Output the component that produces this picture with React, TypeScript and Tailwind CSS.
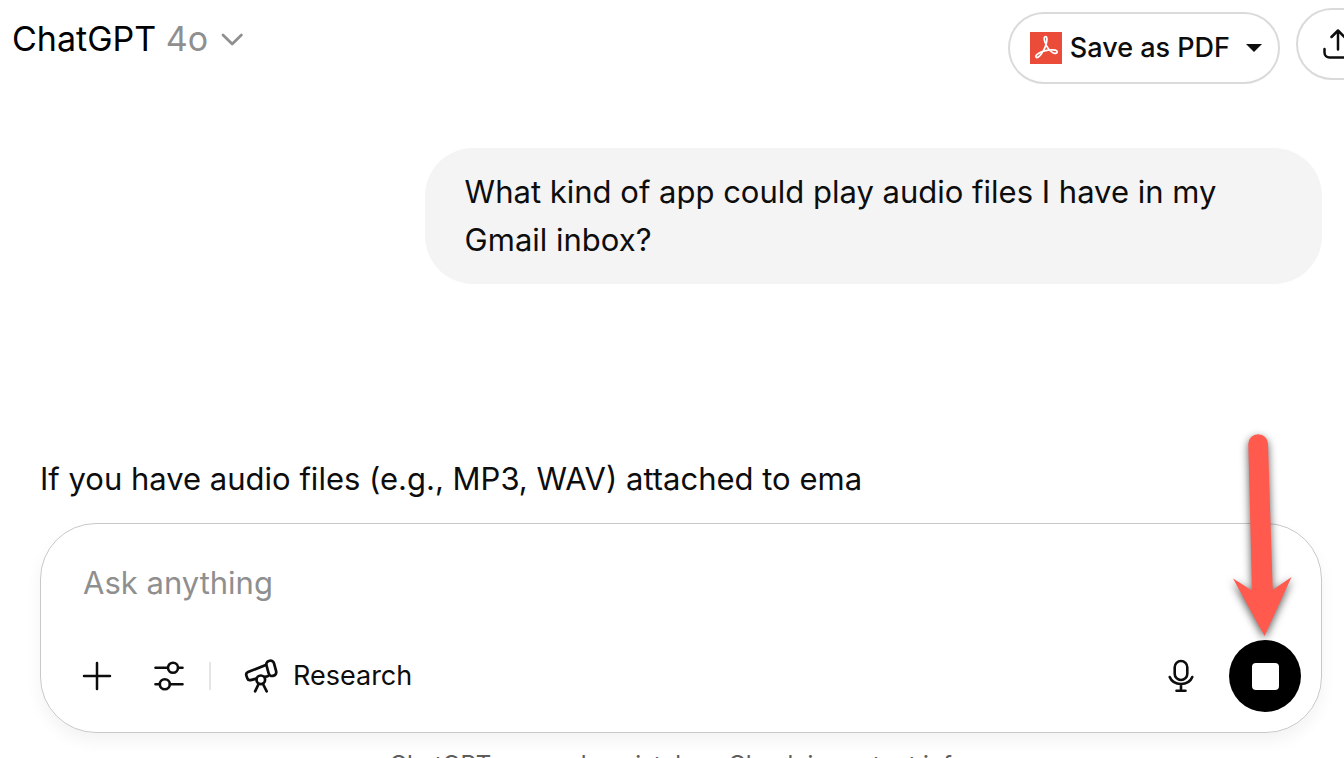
import React from "react";

function ChevronDown() {
  return (
    <svg className="h-6 w-6" viewBox="0 0 24 24" fill="none" stroke="currentColor" strokeWidth="2.7" strokeLinecap="round" strokeLinejoin="round" aria-hidden="true">
      <path d="M3 8l9.200 9 9.200-9" />
    </svg>
  );
}

function PdfIcon() {
  return (
    <svg className="h-8 w-8" viewBox="0 0 32 32" fill="none" aria-hidden="true">
      <rect width="32" height="32" fill="#eb4c3a" />
      <path
        d="M15.600 4.600c-2 0-1.600 2.800-.6 5.600 1.400 4 4.400 8.300 7.600 10.400 2 1.300 4.600 1 4.600-.8s-3-2-5.600-1.900c-4.400.1-9.400 1.300-12.800 3.300-2.400 1.400-3.600 3-2.700 4 1 1 3.400-.6 5.200-3.200 2.600-3.800 4.800-8.400 5.400-12.400.4-2.800.4-5-1.100-5Z"
        stroke="#fff"
        strokeWidth="1.700"
        strokeLinejoin="round"
      />
    </svg>
  );
}

function ShareIcon() {
  return (
    <svg className="h-9 w-9 shrink-0" viewBox="0 0 36 36" fill="none" stroke="currentColor" strokeWidth="2.500" strokeLinecap="round" strokeLinejoin="round" aria-hidden="true">
      <path d="M18 23.500V5M11.500 11 18 4.500 24.500 11M4.500 23v3.500a5 5 0 0 0 5 5h17a5 5 0 0 0 5-5V23" />
    </svg>
  );
}

function PlusIcon() {
  return (
    <svg className="h-8 w-8" viewBox="0 0 32 32" fill="none" stroke="currentColor" strokeWidth="2.500" strokeLinecap="round" aria-hidden="true">
      <path d="M16 3v26M3 16h26" />
    </svg>
  );
}

function SlidersIcon() {
  return (
    <svg className="h-8 w-8" viewBox="0 0 32 32" fill="none" stroke="currentColor" strokeWidth="2.600" strokeLinecap="round" aria-hidden="true">
      <path d="M2.500 7.700h12M25.500 7.700h4M2.500 24.300h4M17 24.300h12.500" />
      <circle cx="20" cy="7.700" r="5" />
      <circle cx="11.800" cy="24.300" r="5" />
    </svg>
  );
}

function TelescopeIcon() {
  return (
    <svg className="h-9 w-9" viewBox="0 0 36 36" fill="none" stroke="currentColor" strokeWidth="2.700" strokeLinecap="round" strokeLinejoin="round" aria-hidden="true">
      <path d="M22.800 7 5 14.100a2.800 2.800 0 0 0-1.600 3.500l.9 2.700a2.800 2.800 0 0 0 3.300 1.800l6-1.500M21.800 18.900l3-.7" />
      <rect x="24.400" y="2.600" width="7.800" height="15.400" rx="3.400" transform="rotate(-15 28.300 10.300)" />
      <circle cx="17.800" cy="21.800" r="4.300" />
      <path d="m15.600 26-3.500 7.300M20 26l3.700 7.300" />
    </svg>
  );
}

function MicIcon() {
  return (
    <svg className="h-9 w-9" viewBox="0 0 36 36" fill="none" stroke="currentColor" strokeWidth="2.600" strokeLinecap="round" aria-hidden="true">
      <rect x="11.700" y="3" width="12.600" height="19" rx="6.300" />
      <path d="M6.700 19a12 10.500 0 0 0 22.600 0M18 26.500v6M13.500 32.700h9" />
    </svg>
  );
}

function ArrowAnnotation() {
  return (
    <svg className="pointer-events-none absolute right-5 bottom-20 h-56 w-20 overflow-visible drop-shadow-[0_3px_4px_rgba(0,0,0,0.65)]" viewBox="0 0 80 224" aria-hidden="true">
      <path d="M27.300 16a9.800 9.800 0 0 1 19.700 0L51.700 162 70.500 149 43.500 208 12 150.500 31 162.500Z" fill="#ff5a4d" />
    </svg>
  );
}

export default function App() {
  return (
    <div className="flex h-screen flex-col overflow-hidden bg-white font-[Inter,'Liberation_Sans',sans-serif] text-[#0d0d0d]">
      <header className="flex shrink-0 items-start justify-between pt-2 pl-3">
        <button type="button" className="flex items-center gap-3 pt-2 text-[34px] leading-[46px] text-black">
          <span>
            ChatGPT <span className="text-[#8f8f8f]">4o</span>
          </span>
          <span className="text-[#8f8f8f]">
            <ChevronDown />
          </span>
        </button>
        <div className="-mr-12 flex items-start gap-4">
          <button type="button" className="mt-1 flex h-[72px] items-center gap-2 rounded-full border-2 border-[#dadada] pr-4 pl-5 text-[27px] font-medium">
            <PdfIcon />
            Save as PDF
            <svg className="ml-2 h-2 w-4" viewBox="0 0 16 8" aria-hidden="true">
              <path d="M0 0h16L8 8Z" fill="currentColor" />
            </svg>
          </button>
          <button type="button" aria-label="Share" className="flex h-[72px] w-24 shrink-0 items-center rounded-full border-2 border-[#dadada] pl-[22px]">
            <ShareIcon />
          </button>
        </div>
      </header>

      <main className="flex shrink-0 flex-col pr-[22px] pl-10">
        <p className="mt-16 w-[70%] self-end rounded-[48px] bg-[#f4f4f4] px-10 py-5 text-[31px] leading-[48px]">
          What kind of app could play audio files I have in my Gmail inbox?
        </p>
        <p className="mt-[171px] text-[31px] leading-[48px]">If you have audio files (e.g., MP3, WAV) attached to ema</p>

        <form onSubmit={(e) => e.preventDefault()} className="relative mt-5 flex flex-col rounded-[56px] border border-[#c8c8c8] px-5 pt-[34px] pb-5 shadow-[0_8px_16px_rgba(0,0,0,0.05)]">
          <input type="text" aria-label="Ask anything" placeholder="Ask anything" className="mx-[22px] h-12 text-[31px] outline-none placeholder:text-[#8f8f8f]" />
          <div className="mt-[34px] flex h-[72px] items-center pl-5">
            <button type="button" aria-label="Add">
              <PlusIcon />
            </button>
            <button type="button" aria-label="Tools" className="ml-10">
              <SlidersIcon />
            </button>
            <span className="ml-6 h-7 w-0.5 bg-[#e5e5e5]" />
            <button type="button" className="ml-8 flex items-center gap-[14px] text-[27px]">
              <TelescopeIcon />
              Research
            </button>
            <button type="button" aria-label="Dictate" className="ml-auto">
              <MicIcon />
            </button>
            <button type="button" aria-label="Stop" className="ml-[30px] flex h-[72px] w-[72px] items-center justify-center rounded-full bg-black">
              <span className="h-[27px] w-[27px] rounded-[4px] bg-white" />
            </button>
          </div>
          <ArrowAnnotation />
        </form>
        <p className="mt-4 text-center text-[24px] leading-8 text-[#5d5d5d]">ChatGPT can make mistakes. Check important info.</p>
      </main>
    </div>
  );
}
